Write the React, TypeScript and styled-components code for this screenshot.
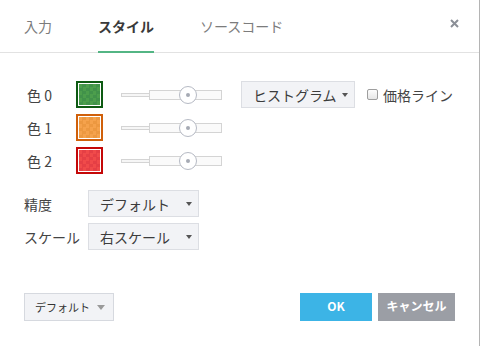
import React from 'react';
import styled, { createGlobalStyle } from 'styled-components';

const GlobalStyle = createGlobalStyle`
    html, body {
        margin: 0;
        padding: 0;
        background: #ffffff;
    }
    * {
        box-sizing: border-box;
    }
`;

const Dialog = styled.div`
    width: 480px;
    height: 346px;
    background: #ffffff;
    border-right: 1px solid #b4b4b4;
    display: flex;
    flex-direction: column;
    font-family: 'Noto Sans CJK JP', 'Noto Sans', sans-serif;
    font-size: 14px;
    line-height: 20px;
    color: #444;
`;

const Header = styled.div`
    height: 53px;
    display: flex;
    align-items: stretch;
    padding-left: 24px;
    border-bottom: 1px solid #e2e2e2;
`;

const Tab = styled.div<{ $active?: boolean }>`
    display: flex;
    align-items: center;
    margin-right: 46px;
    margin-bottom: -1px;
    padding-top: 1px;
    font-size: 14px;
    font-weight: ${(p) => (p.$active ? 700 : 400)};
    color: ${(p) => (p.$active ? '#3a3a3a' : '#7c7c7c')};
    border-bottom: 2px solid ${(p) => (p.$active ? '#53b584' : 'transparent')};
`;

const Close = styled.div`
    margin-left: auto;
    margin-right: 20px;
    margin-top: 19px;
    width: 9px;
    height: 9px;
    display: flex;
`;

const Body = styled.div`
    padding: 28px 24px 0;
`;

const RowGroup = styled.div<{ $top?: number }>`
    display: flex;
    flex-direction: column;
    gap: 6px;
    margin-top: ${(p) => p.$top ?? 0}px;
`;

const Row = styled.div`
    display: flex;
    align-items: center;
    height: 27px;
`;

const Label = styled.div<{ $width: number; $indent?: number }>`
    width: ${(p) => p.$width}px;
    flex: none;
    padding-left: ${(p) => p.$indent ?? 0}px;
    white-space: nowrap;
    color: #444;
`;

const Swatch = styled.div<{ $fill: string; $shade: string; $edge: string }>`
    width: 27px;
    height: 27px;
    border: 2px solid ${(p) => p.$edge};
    padding: 1px;
    margin-right: 18px;
    background: #fff;

    &::after {
        content: '';
        display: block;
        width: 100%;
        height: 100%;
        background-color: ${(p) => p.$fill};
        background-image: conic-gradient(
            ${(p) => p.$shade} 25%,
            transparent 0 50%,
            ${(p) => p.$shade} 0 75%,
            transparent 0
        );
        background-size: 7px 7px;
    }
`;

const Slider = styled.div`
    position: relative;
    width: 101px;
    height: 18px;
    display: flex;
    align-items: center;
    margin-right: 19px;
`;

const ThinTrack = styled.div`
    width: 28px;
    height: 4px;
    border: 1px solid #d4d4d4;
    border-right: none;
    background: #f6f6f6;
`;

const WideTrack = styled.div`
    flex: 1;
    height: 10px;
    border: 1px solid #d4d4d4;
    background: #fafafa;
`;

const Thumb = styled.div`
    position: absolute;
    top: 0;
    width: 18px;
    height: 18px;
    margin-left: -9px;
    border-radius: 50%;
    border: 1px solid #b6bac4;
    background: #fff;
    display: flex;
    align-items: center;
    justify-content: center;

    &::after {
        content: '';
        width: 4px;
        height: 4px;
        border-radius: 50%;
        background: #a6aab4;
    }
`;

const Select = styled.div<{ $width: number }>`
    width: ${(p) => p.$width}px;
    height: 27px;
    display: flex;
    align-items: center;
    padding: 0 6px 0 11px;
    background: #f2f3f6;
    border: 1px solid #dcdee3;
    color: #3c3c3c;
    white-space: nowrap;
`;

const Caret = styled.span<{ $size?: number; $color?: string }>`
    margin-left: auto;
    width: 0;
    height: 0;
    border-left: ${(p) => (p.$size ?? 7) / 2}px solid transparent;
    border-right: ${(p) => (p.$size ?? 7) / 2}px solid transparent;
    border-top: ${(p) => Math.round((p.$size ?? 7) * 0.6)}px solid ${(p) => p.$color ?? '#555'};
`;

const CheckLabel = styled.label`
    display: flex;
    align-items: center;
    margin-left: 12px;
    color: #444;
    white-space: nowrap;
`;

const CheckBox = styled.span`
    width: 11px;
    height: 11px;
    margin-right: 5px;
    border: 1px solid #9e9e9e;
    border-radius: 2px;
    background: linear-gradient(#fdfdfd, #e6e6e6);
`;

const Footer = styled.div`
    margin-top: 43px;
    padding: 0 24px;
    display: flex;
    align-items: center;
`;

const PresetSelect = styled.div`
    width: 90px;
    height: 28px;
    display: flex;
    align-items: center;
    padding: 0 8px 0 10px;
    background: #f2f3f6;
    border: 1px solid #d6d9df;
    font-size: 11px;
    color: #333;
`;

const Button = styled.div<{ $bg: string; $width: number }>`
    width: ${(p) => p.$width}px;
    height: 28px;
    display: flex;
    align-items: center;
    justify-content: center;
    padding-bottom: 2px;
    background: ${(p) => p.$bg};
    color: #fff;
    font-size: 12px;
    font-weight: 700;
`;

const Buttons = styled.div`
    margin-left: auto;
    display: flex;
    gap: 6px;
`;

const colors = [
    { name: '色 0', fill: '#4c9e4c', shade: '#41924a', edge: '#0d5a12' },
    { name: '色 1', fill: '#f5a24c', shade: '#ec9840', edge: '#d0600a' },
    { name: '色 2', fill: '#f04a4a', shade: '#e53f45', edge: '#c40808' },
];

function ColorSlider({ value }: { value: number }): React.ReactElement {
    return (
        <Slider>
            <ThinTrack />
            <WideTrack />
            <Thumb style={{ left: `${value}%` }} />
        </Slider>
    );
}

export default function App(): React.ReactElement {
    return (
        <>
            <GlobalStyle />
            <Dialog>
                <Header>
                    <Tab>入力</Tab>
                    <Tab $active>スタイル</Tab>
                    <Tab>ソースコード</Tab>
                    <Close>
                        <svg width="9" height="9" viewBox="0 0 9 9">
                            <path d="M1 1L8 8M8 1L1 8" stroke="#8b8f97" strokeWidth="2" />
                        </svg>
                    </Close>
                </Header>
                <Body>
                    <RowGroup>
                        {colors.map((c, i) => (
                            <Row key={c.name}>
                                <Label $width={52} $indent={3}>{c.name}</Label>
                                <Swatch $fill={c.fill} $shade={c.shade} $edge={c.edge} />
                                <ColorSlider value={66.5} />
                                {i === 0 && (
                                    <>
                                        <Select $width={114}>
                                            ヒストグラム
                                            <Caret $size={6} />
                                        </Select>
                                        <CheckLabel>
                                            <CheckBox />
                                            価格ライン
                                        </CheckLabel>
                                    </>
                                )}
                            </Row>
                        ))}
                    </RowGroup>
                    <RowGroup $top={16}>
                        <Row>
                            <Label $width={64}>精度</Label>
                            <Select $width={111}>
                                デフォルト
                                <Caret $size={7} />
                            </Select>
                        </Row>
                        <Row>
                            <Label $width={64}>スケール</Label>
                            <Select $width={111}>
                                右スケール
                                <Caret $size={7} />
                            </Select>
                        </Row>
                    </RowGroup>
                </Body>
                <Footer>
                    <PresetSelect>
                        デフォルト
                        <Caret $size={8} $color="#9a9a9a" />
                    </PresetSelect>
                    <Buttons>
                        <Button $bg="#3cb4e6" $width={72}>OK</Button>
                        <Button $bg="#9b9ea5" $width={77}>キャンセル</Button>
                    </Buttons>
                </Footer>
            </Dialog>
        </>
    );
}
